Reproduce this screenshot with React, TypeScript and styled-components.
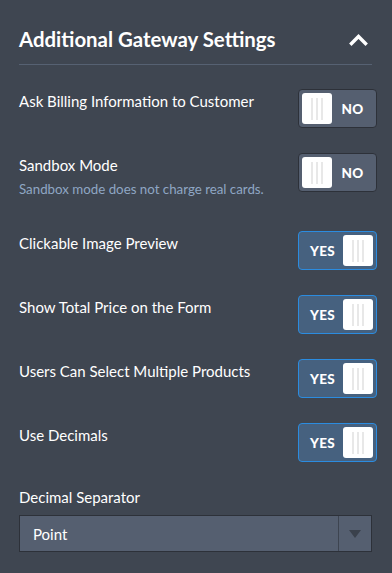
import styled, { createGlobalStyle } from "styled-components";

const GlobalStyle = createGlobalStyle`
  html, body {
    margin: 0;
    padding: 0;
    background: #3f4651;
  }
  body {
    font-family: Lato, "Open Sans", sans-serif;
    color: #ffffff;
  }
`;

const Panel = styled.div`
  width: 392px;
  height: 573px;
  box-sizing: border-box;
  padding: 0 20px 0 19px;
  background: #3f4651;
  overflow: hidden;
`;

const Header = styled.div`
  display: flex;
  align-items: center;
  justify-content: space-between;
  padding: 25px 0 11px;
  border-bottom: 1px solid #566172;
`;

const Title = styled.h2`
  margin: 0;
  font-size: 20.4px;
  line-height: 28px;
  font-weight: 700;
  color: #ffffff;
`;

const Chevron = styled.svg`
  width: 19px;
  height: 13px;
  margin-right: 4px;
  display: block;
`;

const List = styled.div`
  display: flex;
  flex-direction: column;
  gap: 25px;
  padding-top: 24px;
`;

const Row = styled.div`
  display: flex;
  align-items: flex-start;
  justify-content: space-between;
`;

const TextBlock = styled.div`
  padding-top: 2px;
  display: flex;
  flex-direction: column;
  gap: 5px;
`;

const Label = styled.div`
  font-size: 15px;
  line-height: 20px;
  color: #ffffff;
`;

const Hint = styled.div`
  font-size: 13.3px;
  line-height: 18px;
  color: #8fa6c4;
  margin-bottom: 8px;
`;

const Toggle = styled.div<{ $on: boolean }>`
  width: 79px;
  height: 39px;
  box-sizing: border-box;
  margin-right: -5px;
  padding: 3px;
  border-radius: 4px;
  border: 1px solid ${(p) => (p.$on ? "#2b8ce0" : "#2d3139")};
  background: ${(p) => (p.$on ? "#46617f" : "#555f70")};
  display: flex;
  flex-direction: ${(p) => (p.$on ? "row-reverse" : "row")};
  align-items: center;
`;

const Knob = styled.div`
  width: 30px;
  height: 31px;
  border-radius: 3px;
  background: #ffffff;
  display: flex;
  align-items: center;
  justify-content: center;
  gap: 3px;
  span {
    width: 2px;
    height: 22px;
    background: #e8e8e8;
  }
`;

const ToggleText = styled.div`
  flex: 1;
  text-align: center;
  font-size: 13.5px;
  font-weight: 900;
  letter-spacing: 0.3px;
  color: #ffffff;
`;

const FieldLabel = styled(Label)`
  margin-bottom: 8px;
`;

const Select = styled.div`
  height: 37px;
  box-sizing: border-box;
  border: 1px solid #2d3139;
  background: #555f70;
  display: flex;
  align-items: stretch;
`;

const SelectValue = styled.div`
  flex: 1;
  display: flex;
  align-items: center;
  padding-left: 13px;
  font-size: 15px;
  color: #ffffff;
`;

const SelectArrow = styled.div`
  width: 32px;
  border-left: 1px solid #3d4450;
  display: flex;
  align-items: center;
  justify-content: center;
  svg {
    width: 12px;
    height: 8px;
    display: block;
  }
`;

type Setting = {
  label: string;
  hint?: string;
  on: boolean;
};

const settings: Setting[] = [
  { label: "Ask Billing Information to Customer", on: false },
  {
    label: "Sandbox Mode",
    hint: "Sandbox mode does not charge real cards.",
    on: false,
  },
  { label: "Clickable Image Preview", on: true },
  { label: "Show Total Price on the Form", on: true },
  { label: "Users Can Select Multiple Products", on: true },
  { label: "Use Decimals", on: true },
];

const Switch = ({ on }: { on: boolean }) => (
  <Toggle $on={on}>
    <Knob>
      <span />
      <span />
      <span />
    </Knob>
    <ToggleText>{on ? "YES" : "NO"}</ToggleText>
  </Toggle>
);

export default function App() {
  return (
    <Panel>
      <GlobalStyle />
      <Header>
        <Title>Additional Gateway Settings</Title>
        <Chevron viewBox="0 0 19 13">
          <polyline
            points="2.5,10.5 9.5,3.5 16.5,10.5"
            fill="none"
            stroke="#ffffff"
            strokeWidth="3.4"
            strokeLinecap="square"
          />
        </Chevron>
      </Header>
      <List>
        {settings.map((s) => (
          <Row key={s.label}>
            <TextBlock>
              <Label>{s.label}</Label>
              {s.hint && <Hint>{s.hint}</Hint>}
            </TextBlock>
            <Switch on={s.on} />
          </Row>
        ))}
        <div>
          <FieldLabel>Decimal Separator</FieldLabel>
          <Select>
            <SelectValue>Point</SelectValue>
            <SelectArrow>
              <svg viewBox="0 0 12 8">
                <polygon points="0,0 12,0 6,8" fill="#3a414c" />
              </svg>
            </SelectArrow>
          </Select>
        </div>
      </List>
    </Panel>
  );
}
